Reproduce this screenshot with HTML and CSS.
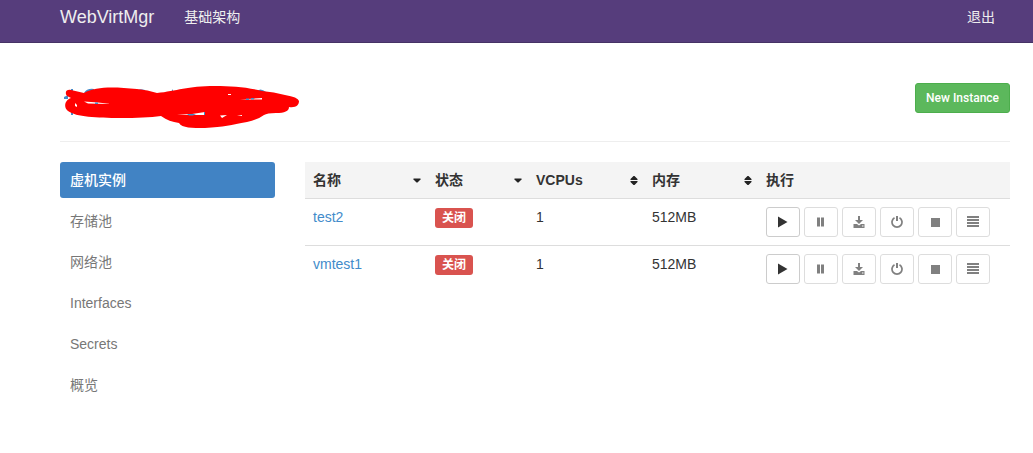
FILE: index.html
```html
<!DOCTYPE html>
<html lang="zh-CN">
<head>
<meta charset="utf-8">
<meta name="viewport" content="width=device-width, initial-scale=1">
<title>WebVirtMgr</title>
<link rel="stylesheet" href="styles.css">
</head>
<body>
<svg class="sprite" aria-hidden="true">
  <symbol id="play" viewBox="0 0 12 12"><path d="M1 0.5 10.5 6 1 11.5z"/></symbol>
  <symbol id="pause" viewBox="0 0 12 12"><path d="M2 1.500h3v9H2zM6 1.500h3v9H6z"/></symbol>
  <symbol id="save" viewBox="0 0 12 12"><path d="M5 0h2v4h3L6 8 2 4h3zM.5 8H4l2 1.500L8 8h3.500v4H.5zM9 9.500v1h1.500v-1z" fill-rule="evenodd"/></symbol>
  <symbol id="power" viewBox="0 0 12 12"><path d="M5 0h2v5H5z"/><path d="M3.500 1.800a5 5 0 1 0 5 0" fill="none" stroke="currentColor" stroke-width="1.700"/></symbol>
  <symbol id="stop" viewBox="0 0 12 12"><path d="M2 2h9v9H2z"/></symbol>
  <symbol id="list" viewBox="0 0 12 12"><path d="M0 0h12v2H0zM0 3h12v2H0zM0 6h12v2H0zM0 9h12v2H0z"/></symbol>
  <symbol id="down" viewBox="0 0 8 9"><path d="M.5 2.500h7v1L4.500 6.500h-1L.5 3.500z"/></symbol>
  <symbol id="both" viewBox="0 0 8 9"><path d="M.5 4V3L3.500 0h1l3 3v1zM.5 5h7v1L4.500 9h-1L.5 6z"/></symbol>
</svg>

<header class="navbar">
  <nav class="container navbar-inner">
    <a class="brand" href="#">WebVirtMgr</a>
    <a class="nav-link" href="#">基础架构</a>
    <a class="nav-link logout" href="#">退出</a>
  </nav>
</header>

<main class="container">
  <div class="page-header">
    <svg class="redaction" viewBox="60 83 240 48" role="img" aria-label="Host name hidden">
      <path class="hidden-text" d="M64 97l4-2v4h-4zM71 89h2v4h-2zM71 110h2v5h-2zM84 93q3-5 10-4v3zM137 91q2-3 8-1v2zM171 92l2-3v3zM256 92q4-5 10 0z"/>
      <path class="scribble" d="M71 90C67 89 64 92 67 96L71 98C65 100 63 107 68 111C76 117 97 118 120 118Q145 118 161 116C167 120 172 122 179 123C182 128 192 128 205 128C224 127 231 125 247 122Q259 119 264 115Q267 113 276 113Q289 113 289 107C296 108 299 105 299 101Q298 97 285 95Q274 92 262 91C246 87 232 86 215 86C187 86 177 91 157 93Q148 90 137 89C115 87 96 86 84 93Z"/>
      <path class="gap" d="M84 101.500 98 102.500 111 104 88 103.500zM75 103l2 2v2l-2-1zM177 114.500 192 114 205 112v3l-17 0zM220 115.500l7-.5-5 3zM237 115.500l5-.5v1zM240 99.500l22-1.500v1.500zM228 94h3v1h-3z"/>
      <path class="hidden-text" d="M95 102.500h3v1.500h-3zM187 114h9l-3 1.500h-4zM204 112h1v3h-1zM246 98.500h3v1.500h-3zM251 98h3v1.500h-3z"/>
    </svg>
    <button class="btn-new" type="button">New Instance</button>
  </div>

  <div class="content">
    <nav class="sidebar">
      <a class="side-link active" href="#">虚机实例</a>
      <a class="side-link" href="#">存储池</a>
      <a class="side-link" href="#">网络池</a>
      <a class="side-link" href="#">Interfaces</a>
      <a class="side-link" href="#">Secrets</a>
      <a class="side-link" href="#">概览</a>
    </nav>

    <table class="instances">
      <colgroup><col class="col-name"><col class="col-state"><col class="col-cpu"><col class="col-mem"><col></colgroup>
      <thead>
        <tr>
          <th><div class="sort">名称<svg><use href="#down"/></svg></div></th>
          <th><div class="sort">状态<svg><use href="#down"/></svg></div></th>
          <th><div class="sort">VCPUs<svg><use href="#both"/></svg></div></th>
          <th><div class="sort">内存<svg><use href="#both"/></svg></div></th>
          <th>执行</th>
        </tr>
      </thead>
      <tbody>
        <tr>
          <td><a href="#">test2</a></td>
          <td><span class="label">关闭</span></td>
          <td>1</td>
          <td>512MB</td>
          <td><div class="actions">
            <button type="button" aria-label="Start"><svg><use href="#play"/></svg></button>
            <button type="button" aria-label="Pause" disabled><svg><use href="#pause"/></svg></button>
            <button type="button" aria-label="Save" disabled><svg><use href="#save"/></svg></button>
            <button type="button" aria-label="Power off" disabled><svg><use href="#power"/></svg></button>
            <button type="button" aria-label="Stop" disabled><svg><use href="#stop"/></svg></button>
            <button type="button" aria-label="Console" disabled><svg><use href="#list"/></svg></button>
          </div></td>
        </tr>
        <tr>
          <td><a href="#">vmtest1</a></td>
          <td><span class="label">关闭</span></td>
          <td>1</td>
          <td>512MB</td>
          <td><div class="actions">
            <button type="button" aria-label="Start"><svg><use href="#play"/></svg></button>
            <button type="button" aria-label="Pause" disabled><svg><use href="#pause"/></svg></button>
            <button type="button" aria-label="Save" disabled><svg><use href="#save"/></svg></button>
            <button type="button" aria-label="Power off" disabled><svg><use href="#power"/></svg></button>
            <button type="button" aria-label="Stop" disabled><svg><use href="#stop"/></svg></button>
            <button type="button" aria-label="Console" disabled><svg><use href="#list"/></svg></button>
          </div></td>
        </tr>
      </tbody>
    </table>
  </div>
</main>
</body>
</html>
```
FILE: styles.css
```css
* { box-sizing: border-box; }

body {
  margin: 0;
  background: #fff;
  color: #333;
  font: 14px/20px "Liberation Sans", "Noto Sans CJK SC", sans-serif;
}

a { color: #428bca; text-decoration: none; }
svg { display: block; fill: currentColor; }
.sprite { display: none; }

.container {
  max-width: 1140px;
  margin: 0 auto;
  padding: 0 23px 0 60px;
}

.navbar {
  background: #563d7c;
  border-bottom: 1px solid #463265;
}
.navbar-inner {
  display: flex;
  align-items: center;
  padding-top: 7px;
  padding-bottom: 15px;
}
.navbar a { color: #eee; }
.navbar .brand { margin-right: 30px; font-size: 18px; }
.navbar .logout { margin-left: auto; margin-right: 15px; }

.page-header {
  display: flex;
  justify-content: space-between;
  align-items: flex-start;
  padding: 40px 0 10px;
  margin-bottom: 20px;
  border-bottom: 1px solid #eee;
}
.redaction { width: 240px; height: 48px; }
.scribble { fill: #f00; }
.gap { fill: #fff; }
.hidden-text { fill: #428bca; }

.btn-new {
  height: 30px;
  padding: 0 10px;
  background: #5cb85c;
  border: 1px solid #4cae4c;
  border-radius: 3px;
  color: #fff;
  font: 500 12px/18px Roboto, sans-serif;
}

.content {
  display: grid;
  grid-template-columns: 215px 1fr;
  gap: 30px;
  align-items: start;
}

.sidebar { display: grid; gap: 5px; }
.side-link {
  padding: 8px 10px;
  border-radius: 3px;
  color: #777;
}
.side-link.active {
  background: #4183c4;
  color: #fff;
  font-weight: 500;
}

.instances {
  width: 100%;
  table-layout: fixed;
  border-collapse: separate;
  border-spacing: 0;
}
.col-name { width: 122px; }
.col-state { width: 101px; }
.col-cpu { width: 116px; }
.col-mem { width: 114px; }

th, td { padding: 8px; text-align: left; vertical-align: top; }
th { padding-right: 6px; background: #f4f4f4; }
td { border-top: 1px solid #ddd; }

.sort { display: flex; align-items: center; justify-content: space-between; }
.sort svg { width: 8px; height: 9px; color: #222; }

.label {
  display: inline-block;
  margin-top: 1px;
  padding: 0 7px;
  background: #d9534f;
  border-radius: 3px;
  color: #fff;
  font-size: 12px;
  font-weight: 700;
}

.actions { display: flex; gap: 4px; }
.actions button {
  display: grid;
  place-items: center;
  width: 34px;
  height: 30px;
  padding: 0;
  background: #fff;
  border: 1px solid #ccc;
  border-radius: 3px;
  color: #333;
}
.actions button:disabled { border-color: #ddd; color: #808080; }
.actions svg { width: 12px; height: 12px; }
```
